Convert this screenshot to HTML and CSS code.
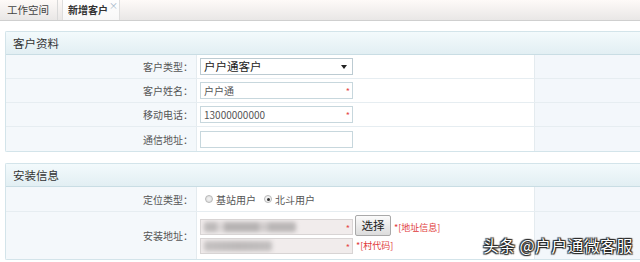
FILE: index.html
```html
<!DOCTYPE html>
<html>
<head>
<meta charset="utf-8">
<link rel="stylesheet" href="styles.css">
</head>
<body>
<div class="tabs">
  <div class="tab">工作空间</div>
  <div class="tab active"><span class="tt">新增客户</span><span class="close">×</span></div>
</div>
<div class="content">
  <div class="panel">
    <div class="ph">客户资料</div>
    <div class="row">
      <div class="lab">客户类型：</div>
      <div class="val"><div class="sel">户户通客户<span class="arr"></span></div></div>
      <div class="rest"></div>
    </div>
    <div class="row">
      <div class="lab">客户姓名：</div>
      <div class="val"><div class="inp">户户通<span class="star">*</span></div></div>
      <div class="rest"></div>
    </div>
    <div class="row">
      <div class="lab">移动电话：</div>
      <div class="val"><div class="inp">13000000000<span class="star">*</span></div></div>
      <div class="rest"></div>
    </div>
    <div class="row">
      <div class="lab">通信地址：</div>
      <div class="val"><div class="inp"></div></div>
      <div class="rest"></div>
    </div>
  </div>
  <div class="panel">
    <div class="ph">安装信息</div>
    <div class="row r2">
      <div class="lab">定位类型：</div>
      <div class="val radios"><span class="rd"></span><span class="rt">基站用户</span><span class="rd on"></span><span class="rt">北斗用户</span></div>
      <div class="rest"></div>
    </div>
    <div class="row r3">
      <div class="lab">安装地址：</div>
      <div class="val addr">
        <div class="aline">
          <div class="inp gray"><span class="blur b1"></span><span class="star">*</span></div>
          <div class="btn">选择</div>
          <span class="hint">*[地址信息]</span>
        </div>
        <div class="aline">
          <div class="inp gray"><span class="blur b2"></span><span class="star">*</span></div>
          <span class="hint">*[村代码]</span>
        </div>
      </div>
      <div class="rest"></div>
    </div>
  </div>
</div>
<div class="wm">头条 @户户通微客服</div>
</body>
</html>
```
FILE: styles.css
```css
* { box-sizing: border-box; }
body {
  margin: 0;
  background: #fff;
  font-family: "Noto Sans CJK SC", "Noto Sans", sans-serif;
  color: #555;
  overflow: hidden;
  position: relative;
  height: 262px;
}
.tabs {
  height: 21px;
  display: flex;
  align-items: flex-end;
  background: linear-gradient(#fefaf8, #e9e7e6);
  border-bottom: 1px solid #cfcfcf;
}
.tab {
  height: 20px;
  line-height: 19px;
  font-size: 10.5px;
  color: #444;
  padding: 0 8px 0 7px;
  width: 58px;
  border-right: 1px solid #d9d9d9;
}
.tab.active {
  margin-left: 4px;
  width: 58px;
  display: flex;
  font-weight: bold;
  color: #333;
  background: linear-gradient(#ffffff, #f7f7f7);
  border-left: 1px solid #dedede;
  border-right: 1px solid #dedede;
  padding: 0 0 0 5px;
}
.tt { font-size: 10px; }
.close {
  align-self: flex-start;
  margin-left: 1px;
  margin-top: 1px;
  font-size: 9px;
  line-height: 10px;
  font-weight: normal;
  color: #9fb4c8;
}
.content { padding: 10px 0 0 5px; }
.panel {
  border: 1px solid #d3e4ea;
  border-right: none;
  margin-bottom: 11px;
  border-radius: 2px 0 0 2px;
}
.ph {
  height: 23px;
  line-height: 22px;
  padding-left: 7px;
  font-size: 11.5px;
  color: #333;
  background: linear-gradient(#f3fafc, #e2eff3);
  border-bottom: 1px solid #c9dde4;
}
.row {
  display: grid;
  grid-template-columns: 191px 338px 1fr;
  height: 24px;
  border-bottom: 1px solid #e6edf1;
}
.row:last-child { border-bottom: none; }
.row.r2 { height: 25px; }
.row.r3 { height: 47px; }
.lab {
  background: #f4f8fb;
  border-right: 1px solid #e4ebef;
  font-size: 10px;
  color: #555;
  padding-right: 3px;
  display: flex;
  align-items: center;
  justify-content: flex-end;
}
.val {
  background: #fff;
  border-right: 1px solid #e4ebef;
  padding-left: 3px;
  display: flex;
  align-items: center;
}
.rest { background: #f3f7fb; }
.sel {
  width: 153px;
  height: 17px;
  border: 1px solid #bccbd2;
  background: #fff;
  font-size: 11.5px;
  color: #222;
  line-height: 15px;
  padding-left: 3px;
  position: relative;
}
.arr {
  position: absolute;
  right: 5px;
  top: 6px;
  width: 0;
  height: 0;
  border-left: 3px solid transparent;
  border-right: 3px solid transparent;
  border-top: 4px solid #222;
}
.inp {
  width: 153px;
  height: 17px;
  border: 1px solid #c7d7dd;
  background: #fff;
  font-size: 10px;
  color: #555;
  line-height: 15px;
  padding-left: 3px;
  position: relative;
}
.star {
  position: absolute;
  right: 2px;
  top: 1px;
  color: #e64a4a;
  font-size: 9px;
}
.radios { font-size: 10px; color: #555; }
.rd {
  width: 8px; height: 8px;
  border-radius: 50%;
  border: 1px solid #b8b8b8;
  background: radial-gradient(#f4f4f4, #d8d8d8);
  margin: 0 3px 0 5px;
  position: relative;
}
.rd.on {
  margin-left: 8px;
  background: #f2f2f2;
}
.rd.on::after {
  content: "";
  position: absolute;
  left: 1.5px; top: 1.5px;
  width: 3px; height: 3px;
  border-radius: 50%;
  background: #333;
}
.addr {
  flex-direction: column;
  align-items: flex-start;
  justify-content: center;
  gap: 1px;
  padding-top: 1px;
}
.aline {
  display: flex;
  align-items: center;
  height: 17px;
}
.aline:first-child { height: 18px; }
.inp.gray {
  height: 16px;
  background: #f1ecec;
  border-color: #d8d4d4;
  overflow: hidden;
}
.blur {
  position: absolute;
  top: 2px;
  left: 3px;
  height: 10px;
  filter: blur(2px);
  border-radius: 2px;
}
.b1 {
  width: 92px;
  background: linear-gradient(90deg, #bdbaba 0 14%, #dad6d6 14% 22%, #b6b3b3 22% 60%, #cfcbcb 60% 70%, #b9b6b6 70% 100%);
}
.b2 {
  width: 68px;
  background: linear-gradient(90deg, #c4c1c1, #bcb9b9 50%, #c2bfbf);
}
.btn {
  margin-left: 2px;
  width: 36px;
  height: 21px;
  margin-top: -3px;
  border: 1px solid #a9a9a9;
  border-radius: 2px;
  background: linear-gradient(#fbfbfb, #dcdcdc);
  font-size: 11.5px;
  color: #222;
  text-align: center;
  line-height: 19px;
}
.hint {
  color: #e03a3a;
  font-size: 9px;
  margin-left: 3px;
}
.wm {
  position: absolute;
  left: 483px;
  top: 233px;
  font-size: 16px;
  color: #fff;
  letter-spacing: 0.3px;
  text-shadow: 0 0 1px #000, 0 0 1px #000, 1px 1px 1px #333, -1px -1px 1px #333, 1px -1px 1px #333, -1px 1px 1px #333;
}
```
